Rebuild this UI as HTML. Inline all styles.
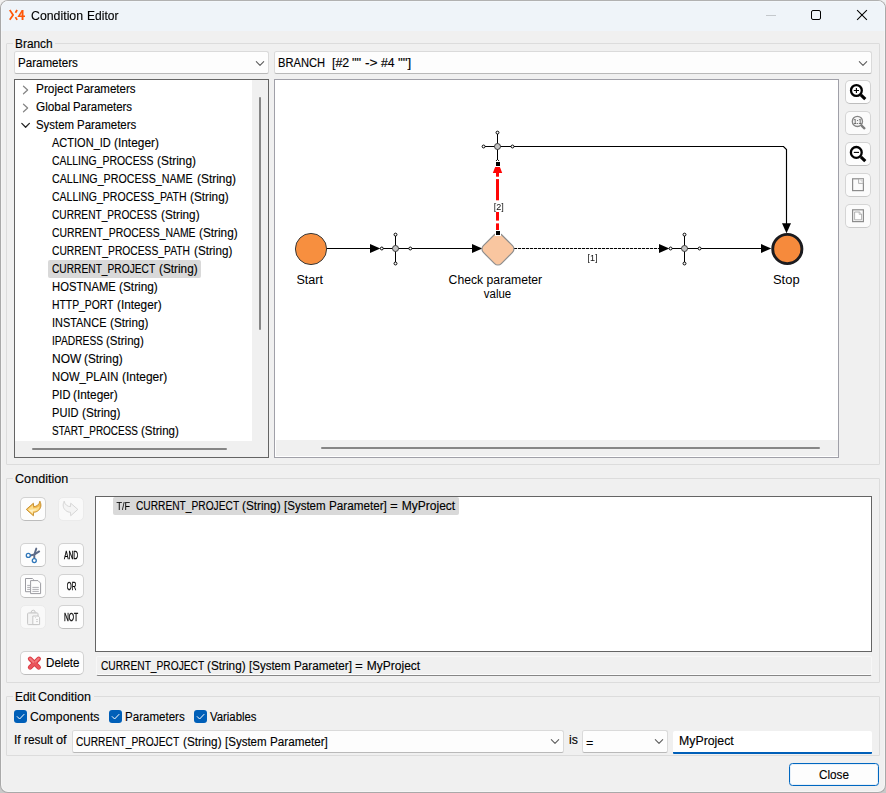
<!DOCTYPE html>
<html lang="en"><head><meta charset="utf-8"><title>Condition Editor</title>
<style>
html,body{margin:0;padding:0;width:886px;height:793px;overflow:hidden}
html{background:#c9c9c9}
body{background:linear-gradient(#f0f0f0 0,#f0f0f0 50%,#c9c9c9 50%,#c9c9c9 100%)}
body{font-family:"Liberation Sans", sans-serif;font-size:12px;color:#000}
.abs{position:absolute}
.win{position:absolute;left:0;top:0;width:886px;height:793px;box-sizing:border-box;border:1px solid #a9a9a9;border-top-color:#b1b1b1;border-radius:8px;background:#f0f0f0;overflow:hidden;box-shadow:inset 0 0 0 1px #f5f5f5}
.win>*{margin-left:-1px;margin-top:-1px}
.title{position:absolute;left:1px;top:1px;width:884px;height:30px;background:#eff4f9;border-radius:7px 7px 0 0;box-shadow:inset 0 1px 0 #f3f7fb,inset 1px 0 0 #f3f7fb,inset -1px 0 0 #f3f7fb}
.grp{position:absolute;box-sizing:border-box;border:1px solid #dcdcdc;border-radius:1px}
.combo{position:absolute;box-sizing:border-box;border:1px solid #dadada;border-bottom-color:#b9b9b9;border-radius:2.5px;background:#fdfdfd}
.tree{position:absolute;box-sizing:border-box;border:1px solid #646464;background:#f0f0f0}
.canvas{position:absolute;box-sizing:border-box;border:1px solid #a0a0a8;background:#fff}
.btn{position:absolute;box-sizing:border-box;border:1px solid #d2d2d2;border-bottom-color:#bdbdbd;border-radius:5px;background:#fdfdfd}
.btn.soft{border-color:#d5d5d5;border-bottom-color:#c9c9c9;background:#fbfbfb}
.btn.dis{border-color:#ebebeb;background:#f9f9f9}
.btn.def{border:1px solid #0067c0;border-radius:3.5px;box-shadow:inset 0 0 0 1px #5aa0de22}
.status{position:absolute;box-sizing:border-box;border:1px solid #f7f7f7;border-bottom-color:#868686;border-radius:2px;background:#f0f0f0;box-shadow:inset 0 -1px 0 #fcfcfc}
.edit{position:absolute;box-sizing:border-box;border:0;border-bottom:2px solid #005fb8;border-radius:2px 2px 1px 1px;background:#fff}
.t{position:absolute;white-space:pre;line-height:16px;height:16px;-webkit-text-stroke:0.13px #000}
.t i{position:absolute;top:0;font-style:normal;transform-origin:0 50%}
svg{overflow:visible}
svg text{font-family:"Liberation Sans", sans-serif}
</style></head>
<body>
<div class="win">
<div class="title"></div>
<svg class="abs" style="left:8px;top:9px" width="18" height="12" viewBox="0 0 18 12">
<path d="M1.75 1.1 L5.1 5.95 L1.75 10.8" fill="none" stroke="#ff5708" stroke-width="1.75" stroke-linejoin="miter"/>
<path d="M9.1 1 L7.45 3.8 M7.45 8.1 L9.1 10.9" fill="none" stroke="#ff5708" stroke-width="1.75"/>
<path d="M14.55 10.9 V1.1" fill="none" stroke="#ff5708" stroke-width="1.9"/>
<path d="M14.2 1.6 L10.7 7.35 H17" fill="none" stroke="#ff5708" stroke-width="1.5" stroke-linejoin="miter"/>
</svg>
<div class="abs" style="left:766px;top:15px;width:10px;height:1px;background:#c4c8cc"></div>
<div class="abs" style="left:811px;top:10px;width:10px;height:10px;box-sizing:border-box;border:1px solid #000;border-radius:2px"></div>
<svg class="abs" style="left:856px;top:9px" width="12" height="12" viewBox="0 0 12 12"><path d="M1.1 1.1 L10.9 10.9 M10.9 1.1 L1.1 10.9" stroke="#000" stroke-width="1.05" fill="none"/></svg>
<div class="grp" style="left:6px;top:43px;width:874px;height:422px"></div>
<div class="abs" style="left:13px;top:37px;width:41.6px;height:14px;background:#f0f0f0"></div>
<span class="t" style="left:14.55px;top:36px;"><i id="t0_0" style="left:0.00px;transform:scaleX(0.9900)">Branch</i></span>
<div class="grp" style="left:6px;top:478px;width:874px;height:205px"></div>
<div class="abs" style="left:13px;top:472px;width:57.3px;height:14px;background:#f0f0f0"></div>
<span class="t" style="left:14.55px;top:471px;"><i id="t1_0" style="left:0.00px;transform:scaleX(1.0522)">Condition</i></span>
<div class="grp" style="left:6px;top:696px;width:874px;height:60px"></div>
<div class="abs" style="left:13px;top:690px;width:80.9px;height:14px;background:#f0f0f0"></div>
<span class="t" style="left:14.55px;top:689px;"><i id="t2_0" style="left:0.00px;transform:scaleX(0.9940)">Edit </i><i id="t2_1" style="left:23.87px;transform:scaleX(1.0468)">Condition</i></span>
<div class="combo" style="left:14px;top:51px;width:255px;height:23px"></div>
<span class="t" style="left:17.55px;top:55px;"><i id="t3_0" style="left:0.00px;transform:scaleX(0.9648)">Parameters</i></span>
<svg class="abs" style="left:255px;top:59.5px" width="10" height="7" viewBox="0 0 10 7"><path d="M1.3 1.6 L5.0 5.4 L8.7 1.6" fill="none" stroke="#5c5c5c" stroke-width="1.05" stroke-linecap="round" stroke-linejoin="round"/></svg>
<div class="combo" style="left:274px;top:51px;width:598px;height:23px"></div>
<span class="t" style="left:277.75px;top:55px;"><i id="t4_0" style="left:0.00px;transform:scaleX(0.9304)">BRANCH  </i><i id="t4_1" style="left:53.78px;transform:scaleX(1.0320)">[#2 </i><i id="t4_2" style="left:74.44px;transform:scaleX(1.0805)">"" </i><i id="t4_3" style="left:87.25px;transform:scaleX(1.1465)">-&gt; </i><i id="t4_4" style="left:103.70px;transform:scaleX(1.0188)">#4 </i><i id="t4_5" style="left:120.70px;transform:scaleX(1.1089)">""]</i></span>
<svg class="abs" style="left:858px;top:59.5px" width="10" height="7" viewBox="0 0 10 7"><path d="M1.3 1.6 L5.0 5.4 L8.7 1.6" fill="none" stroke="#5c5c5c" stroke-width="1.05" stroke-linecap="round" stroke-linejoin="round"/></svg>
<div class="tree" style="left:14px;top:79px;width:255px;height:379px"><div class="abs" style="left:0;top:0;width:237px;height:361px;background:#fff"></div></div>
<div class="abs" style="left:259px;top:97px;width:2px;height:233px;background:#868686;border-radius:1px"></div>
<div class="abs" style="left:32px;top:448px;width:195px;height:2px;background:#868686;border-radius:1px"></div>
<svg class="abs" style="left:22px;top:84.6px" width="8" height="10" viewBox="0 0 8 10"><path d="M1.5 1.2 L5.6 5 L1.5 8.8" fill="none" stroke="#868686" stroke-width="1.25" stroke-linecap="round" stroke-linejoin="round"/></svg>
<svg class="abs" style="left:22px;top:102.6px" width="8" height="10" viewBox="0 0 8 10"><path d="M1.5 1.2 L5.6 5 L1.5 8.8" fill="none" stroke="#868686" stroke-width="1.25" stroke-linecap="round" stroke-linejoin="round"/></svg>
<svg class="abs" style="left:20px;top:121px" width="11" height="9" viewBox="0 0 11 9"><path d="M1.8 2.4 L5.6 6.2 L9.4 2.4" fill="none" stroke="#262626" stroke-width="1.3" stroke-linecap="round" stroke-linejoin="round"/></svg>
<span class="t" style="left:35.85px;top:81px;"><i id="t5_0" style="left:0.00px;transform:scaleX(0.9865)">Project </i><i id="t5_1" style="left:40.14px;transform:scaleX(0.9594)">Parameters</i></span>
<span class="t" style="left:35.85px;top:99px;"><i id="t6_0" style="left:0.00px;transform:scaleX(0.9825)">Global </i><i id="t6_1" style="left:37.37px;transform:scaleX(0.9525)">Parameters</i></span>
<span class="t" style="left:35.85px;top:117px;"><i id="t7_0" style="left:0.00px;transform:scaleX(0.9502)">System </i><i id="t7_1" style="left:41.19px;transform:scaleX(0.9554)">Parameters</i></span>
<div class="abs" style="left:48px;top:260px;width:153px;height:18px;background:#d9d9d9;border-radius:2px"></div>
<span class="t" style="left:51.85px;top:135px;"><i id="t8_0" style="left:0.00px;transform:scaleX(0.9182)">ACTION_ID </i><i id="t8_1" style="left:62.34px;transform:scaleX(0.9902)">(Integer)</i></span>
<span class="t" style="left:51.85px;top:153px;"><i id="t9_0" style="left:0.00px;transform:scaleX(0.8701)">CALLING_PROCESS </i><i id="t9_1" style="left:105.30px;transform:scaleX(0.9901)">(String)</i></span>
<span class="t" style="left:51.85px;top:171px;"><i id="t10_0" style="left:0.00px;transform:scaleX(0.8892)">CALLING_PROCESS_NAME </i><i id="t10_1" style="left:144.67px;transform:scaleX(0.9934)">(String)</i></span>
<span class="t" style="left:51.85px;top:189px;"><i id="t11_0" style="left:0.00px;transform:scaleX(0.8763)">CALLING_PROCESS_PATH </i><i id="t11_1" style="left:138.64px;transform:scaleX(0.9813)">(String)</i></span>
<span class="t" style="left:51.85px;top:207px;"><i id="t12_0" style="left:0.00px;transform:scaleX(0.8467)">CURRENT_PROCESS </i><i id="t12_1" style="left:108.70px;transform:scaleX(0.9798)">(String)</i></span>
<span class="t" style="left:51.85px;top:225px;"><i id="t13_0" style="left:0.00px;transform:scaleX(0.8679)">CURRENT_PROCESS_NAME </i><i id="t13_1" style="left:147.59px;transform:scaleX(0.9825)">(String)</i></span>
<span class="t" style="left:51.85px;top:243px;"><i id="t14_0" style="left:0.00px;transform:scaleX(0.8574)">CURRENT_PROCESS_PATH </i><i id="t14_1" style="left:141.96px;transform:scaleX(0.9732)">(String)</i></span>
<span class="t" style="left:51.85px;top:261px;"><i id="t15_0" style="left:0.00px;transform:scaleX(0.8500)">CURRENT_PROJECT </i><i id="t15_1" style="left:106.66px;transform:scaleX(0.9810)">(String)</i></span>
<span class="t" style="left:51.85px;top:279px;"><i id="t16_0" style="left:0.00px;transform:scaleX(0.9377)">HOSTNAME </i><i id="t16_1" style="left:67.44px;transform:scaleX(0.9865)">(String)</i></span>
<span class="t" style="left:51.85px;top:297px;"><i id="t17_0" style="left:0.00px;transform:scaleX(0.8639)">HTTP_PORT </i><i id="t17_1" style="left:64.66px;transform:scaleX(0.9831)">(Integer)</i></span>
<span class="t" style="left:51.85px;top:315px;"><i id="t18_0" style="left:0.00px;transform:scaleX(0.9102)">INSTANCE </i><i id="t18_1" style="left:57.92px;transform:scaleX(0.9743)">(String)</i></span>
<span class="t" style="left:51.85px;top:333px;"><i id="t19_0" style="left:0.00px;transform:scaleX(0.8540)">IPADRESS </i><i id="t19_1" style="left:54.35px;transform:scaleX(0.9632)">(String)</i></span>
<span class="t" style="left:51.85px;top:351px;"><i id="t20_0" style="left:0.00px;transform:scaleX(0.9971)">NOW </i><i id="t20_1" style="left:32.58px;transform:scaleX(0.9829)">(String)</i></span>
<span class="t" style="left:51.85px;top:369px;"><i id="t21_0" style="left:0.00px;transform:scaleX(0.9385)">NOW_PLAIN </i><i id="t21_1" style="left:70.03px;transform:scaleX(0.9970)">(Integer)</i></span>
<span class="t" style="left:51.85px;top:387px;"><i id="t22_0" style="left:0.00px;transform:scaleX(0.9203)">PID </i><i id="t22_1" style="left:21.48px;transform:scaleX(0.9869)">(Integer)</i></span>
<span class="t" style="left:51.85px;top:405px;"><i id="t23_0" style="left:0.00px;transform:scaleX(0.9225)">PUID </i><i id="t23_1" style="left:29.77px;transform:scaleX(0.9780)">(String)</i></span>
<span class="t" style="left:51.85px;top:423px;"><i id="t24_0" style="left:0.00px;transform:scaleX(0.8299)">START_PROCESS </i><i id="t24_1" style="left:89.45px;transform:scaleX(0.9607)">(String)</i></span>
<div class="canvas" style="left:274px;top:79px;width:565px;height:379px"><div class="abs" style="left:1px;top:360px;width:562px;height:16px;background:#f0f0f0"></div></div>
<div class="abs" style="left:321px;top:447px;width:499px;height:2px;background:#868686;border-radius:1px"></div>
<svg class="abs" style="left:0;top:0" width="886" height="793" viewBox="0 0 886 793">
<g fill="none" stroke="#000" stroke-width="1">
<!-- flow lines -->
<path d="M327 248.5 H371"/>
<path d="M412 248.5 H473"/>
<path d="M514 248.5 H660" stroke-dasharray="3.15 0.85"/>
<path d="M701 248.5 H762"/>
<path d="M514 146.5 H783.5 L786.5 149.5 V224" stroke-width="1.15"/>
<!-- junction 1 -->
<path d="M383 248.5 H409 M395.5 236 V262"/>
<!-- junction 2 -->
<path d="M672 248.5 H698 M684.5 236 V262"/>
<!-- junction 3 -->
<path d="M485 146.5 H511 M497.5 134 V160"/>
</g>
<g fill="#000" stroke="none">
<path d="M370 244 L380.3 248.5 L370 253 Z"/>
<path d="M472 244 L482.3 248.5 L472 253 Z"/>
<path d="M659 244 L669.3 248.5 L659 253 Z"/>
<path d="M761 244 L771.3 248.5 L761 253 Z"/>
<path d="M782 223.3 L791 223.3 L786.5 233.2 Z"/>
<rect x="496" y="162" width="4" height="4"/>
<rect x="496" y="231" width="4" height="4"/>
<path d="M496 161 L497.5 159.4 L499 161" fill="none" stroke="#000" stroke-width="0.9"/>
</g>
<g fill="#fff" stroke="#000" stroke-width="1">
<circle cx="381.8" cy="248.5" r="1.45"/><circle cx="410.3" cy="248.5" r="1.45"/><circle cx="395.5" cy="234.6" r="1.45"/><circle cx="395.5" cy="263.5" r="1.45"/>
<circle cx="670.6" cy="248.5" r="1.45"/><circle cx="699.6" cy="248.5" r="1.45"/><circle cx="684.5" cy="234.6" r="1.45"/><circle cx="684.5" cy="263.5" r="1.45"/>
<circle cx="483.6" cy="146.5" r="1.45"/><circle cx="512.5" cy="146.5" r="1.45"/><circle cx="497.5" cy="132.6" r="1.45"/>
</g>
<g fill="#c2c2c2" stroke="#3c3c3c" stroke-width="1">
<circle cx="395.5" cy="248.5" r="3"/><circle cx="684.5" cy="248.5" r="3"/><circle cx="497.5" cy="146.5" r="3"/>
</g>
<!-- red connection -->
<g fill="#ff0505" stroke="none">
<path d="M495.2 166.9 H499.9 L502.2 173.1 H492.8 Z"/>
<rect x="496" y="173" width="3" height="3.7"/>
<rect x="496" y="179.1" width="3" height="21.2"/>
<rect x="496" y="212" width="3" height="8.6"/>
<rect x="496" y="223.4" width="3" height="7.4"/>
</g>
<!-- nodes -->
<circle cx="311" cy="249" r="15.6" fill="#f78f3f" stroke="#3a3a3a" stroke-width="1"/>
<circle cx="787.3" cy="249" r="14.6" fill="#f68a3c" stroke="#1b1b1f" stroke-width="2.9"/>
<rect x="485.25" y="236.35" width="25.4" height="25.4" rx="4.8" transform="rotate(45 497.95 249.05)" fill="#f9c6a0" stroke="#8e8e8e" stroke-width="1.2"/>
<rect x="495" y="230" width="6" height="6" fill="#fff"/>
<rect x="496" y="231" width="4" height="4" fill="#000"/>
<!-- labels -->
<g fill="#000" font-size="12px">
<text x="296.4" y="284" textLength="26.6" lengthAdjust="spacingAndGlyphs">Start</text>
<text x="448.6" y="284" textLength="93.6" lengthAdjust="spacingAndGlyphs">Check parameter</text>
<text x="483.8" y="298" textLength="27.4" lengthAdjust="spacingAndGlyphs">value</text>
<text x="773" y="284" textLength="26.6" lengthAdjust="spacingAndGlyphs">Stop</text>
</g>

</svg>

<div class="btn" style="left:845px;top:80px;width:26px;height:24px"></div>
<div class="btn soft" style="left:845px;top:111px;width:26px;height:24px"></div>
<div class="btn" style="left:845px;top:142px;width:26px;height:24px"></div>
<div class="btn soft" style="left:845px;top:173px;width:26px;height:24px"></div>
<div class="btn soft" style="left:845px;top:204px;width:26px;height:24px"></div>
<div class="btn" style="left:20px;top:497px;width:26px;height:24px"></div>
<div class="btn dis" style="left:58px;top:497px;width:26px;height:24px"></div>
<div class="btn" style="left:20px;top:543px;width:26px;height:24px"></div>
<div class="btn" style="left:58px;top:543px;width:26px;height:24px"></div>
<div class="btn" style="left:20px;top:574px;width:26px;height:24px"></div>
<div class="btn" style="left:58px;top:574px;width:26px;height:24px"></div>
<div class="btn dis" style="left:20px;top:605px;width:26px;height:24px"></div>
<div class="btn" style="left:58px;top:605px;width:26px;height:24px"></div>
<div class="btn" style="left:20px;top:651px;width:64px;height:24px"></div>
<span class="t" style="left:46.05px;top:655px;"><i id="t25_0" style="left:0.00px;transform:scaleX(0.9672)">Delete</i></span>
<div class="tree" style="left:95px;top:496px;width:777px;height:156px;background:#fff"></div>
<div class="abs" style="left:113px;top:497px;width:346px;height:18px;background:#d9d9d9;border-radius:2px"></div>
<span class="t" style="left:135.85px;top:498px;"><i id="t26_0" style="left:0.00px;transform:scaleX(0.8498)">CURRENT_PROJECT </i><i id="t26_1" style="left:106.63px;transform:scaleX(0.9809)">(String) </i><i id="t26_2" style="left:148.50px;transform:scaleX(0.9604)">[System </i><i id="t26_3" style="left:193.34px;transform:scaleX(0.9749)">Parameter] </i><i id="t26_4" style="left:254.47px;transform:scaleX(1.1111)">= </i><i id="t26_5" style="left:265.96px;">MyProject</i></span>
<div class="status" style="left:96px;top:656px;width:776px;height:20px"></div>
<span class="t" style="left:100.75px;top:658px;"><i id="t27_0" style="left:0.00px;transform:scaleX(0.8501)">CURRENT_PROJECT </i><i id="t27_1" style="left:106.66px;transform:scaleX(0.9812)">(String) </i><i id="t27_2" style="left:148.54px;transform:scaleX(0.9607)">[System </i><i id="t27_3" style="left:193.40px;transform:scaleX(0.9752)">Parameter] </i><i id="t27_4" style="left:254.55px;transform:scaleX(1.1114)">= </i><i id="t27_5" style="left:266.05px;">MyProject</i></span>
<svg class="abs" style="left:14px;top:710px" width="13" height="13" viewBox="0 0 13 13"><rect x="0" y="0" width="13" height="13" rx="3" fill="#005fb8"/><path d="M3.2 6.6 L5.6 9 L10 4.4" fill="none" stroke="#fff" stroke-width="1" stroke-linecap="round" stroke-linejoin="round"/></svg>
<svg class="abs" style="left:109px;top:710px" width="13" height="13" viewBox="0 0 13 13"><rect x="0" y="0" width="13" height="13" rx="3" fill="#005fb8"/><path d="M3.2 6.6 L5.6 9 L10 4.4" fill="none" stroke="#fff" stroke-width="1" stroke-linecap="round" stroke-linejoin="round"/></svg>
<svg class="abs" style="left:194px;top:710px" width="13" height="13" viewBox="0 0 13 13"><rect x="0" y="0" width="13" height="13" rx="3" fill="#005fb8"/><path d="M3.2 6.6 L5.6 9 L10 4.4" fill="none" stroke="#fff" stroke-width="1" stroke-linecap="round" stroke-linejoin="round"/></svg>
<span class="t" style="left:29.85px;top:709px;"><i id="t28_0" style="left:0.00px;transform:scaleX(1.0206)">Components</i></span>
<span class="t" style="left:124.65px;top:709px;"><i id="t29_0" style="left:0.00px;transform:scaleX(0.9632)">Parameters</i></span>
<span class="t" style="left:209.65px;top:709px;"><i id="t30_0" style="left:0.00px;transform:scaleX(0.9452)">Variables</i></span>
<span class="t" style="left:13.85px;top:732px;"><i id="t31_0" style="left:0.00px;transform:scaleX(1.0095)">If </i><i id="t31_1" style="left:10.11px;transform:scaleX(0.9846)">result </i><i id="t31_2" style="left:42.30px;transform:scaleX(1.0638)">of</i></span>
<div class="combo" style="left:72px;top:730px;width:492px;height:23px"></div>
<span class="t" style="left:76.25px;top:734px;"><i id="t32_0" style="left:0.00px;transform:scaleX(0.8497)">CURRENT_PROJECT </i><i id="t32_1" style="left:106.61px;transform:scaleX(0.9807)">(String) </i><i id="t32_2" style="left:148.48px;transform:scaleX(0.9603)">[System </i><i id="t32_3" style="left:193.31px;transform:scaleX(0.9744)">Parameter]</i></span>
<svg class="abs" style="left:550px;top:738px" width="10" height="7" viewBox="0 0 10 7"><path d="M1.3 1.6 L5.0 5.4 L8.7 1.6" fill="none" stroke="#5c5c5c" stroke-width="1.05" stroke-linecap="round" stroke-linejoin="round"/></svg>
<span class="t" style="left:568.75px;top:732px;"><i id="t33_0" style="left:0.00px;transform:scaleX(1.0205)">is</i></span>
<div class="combo" style="left:582px;top:730px;width:86px;height:23px"></div>
<span class="t" style="left:586.05px;top:735px;"><i id="t34_0" style="left:0.00px;transform:scaleX(1.0477)">=</i></span>
<svg class="abs" style="left:654px;top:738px" width="10" height="7" viewBox="0 0 10 7"><path d="M1.3 1.6 L5.0 5.4 L8.7 1.6" fill="none" stroke="#5c5c5c" stroke-width="1.05" stroke-linecap="round" stroke-linejoin="round"/></svg>
<div class="edit" style="left:673px;top:731px;width:199px;height:23px"></div>
<span class="t" style="left:678.85px;top:733px;"><i id="t35_0" style="left:0.00px;transform:scaleX(1.0264)">MyProject</i></span>
<div class="btn def" style="left:789px;top:763px;width:90px;height:23px"></div>
<span class="t" style="left:818.65px;top:767px;"><i id="t36_0" style="left:0.00px;transform:scaleX(0.9760)">Close</i></span>
<span class="t" style="left:30.55px;top:8px;will-change:transform;"><i id="t37_0" style="left:0.00px;transform:scaleX(1.0272)">Condition </i><i id="t37_1" style="left:55.52px;transform:scaleX(1.0024)">Editor</i></span>
<svg class="abs" style="left:0;top:0;will-change:transform" width="886" height="793" viewBox="0 0 886 793">

<!-- zoom in -->
<g fill="none" stroke="#000" stroke-linecap="round">
<circle cx="856.4" cy="90.5" r="5.4" stroke-width="2.3" fill="#fff"/>
<path d="M860.8 94.8 L865.3 99.1" stroke-width="3.1" stroke-linecap="butt"/>
<path d="M853.8 90.5 H859 M856.4 87.9 V93.1" stroke-width="1.1" stroke-linecap="butt"/>
</g>
<!-- 1:1 -->
<g fill="none" stroke="#858585" stroke-linecap="round">
<circle cx="857.4" cy="121.4" r="5.1" stroke-width="1.3" fill="#f4f4f4"/>
<path d="M861.8 125.8 L864.4 128.3" stroke-width="2.3" stroke="#7c7c7c"/>
</g>
<text x="853.5" y="124" font-size="7px" font-weight="bold" fill="#5a5a5a" textLength="8" lengthAdjust="spacingAndGlyphs">1:1</text>
<!-- zoom out -->
<g fill="none" stroke="#000" stroke-linecap="round">
<circle cx="856.3" cy="152.4" r="5.4" stroke-width="2.3" fill="#fff"/>
<path d="M860.8 156.8 L865.3 161.1" stroke-width="3.1" stroke-linecap="butt"/>
<path d="M853.8 152.4 H859" stroke-width="1.1" stroke-linecap="butt"/>
</g>
<!-- page icons -->
<g fill="#fbfbfb" stroke="#8c8c8c" stroke-width="1.2">
<rect x="852.6" y="178.8" width="10.8" height="11.8"/>
<path d="M858.6 179 V183.4 H863.2" fill="none" stroke-width="0.9" stroke="#a8a8a8"/>
<path d="M858.8 179 L863.2 183.2 V179 Z" fill="#d8d8d8" stroke="none"/>
<rect x="852.6" y="209.8" width="10.8" height="11.8"/>
<path d="M854.6 212 H859.4 L861.6 214.2 V219.8 H854.6 Z" fill="#fff" stroke-width="0.8" stroke="#a0a0a0"/>
<path d="M859.2 212 V214.4 H861.6" fill="none" stroke-width="0.7" stroke="#a8a8a8"/>
</g>
<!-- undo -->
<path d="M26.3 509.4 L33.4 503.2 L33.6 506.6 C36.6 506.6 39.2 504.8 39.9 501.2 C41.6 504.6 41.2 508 38.6 510.3 C37 511.7 35.4 512.2 33.6 512.3 L33.4 515.8 Z" fill="#f3b84c" stroke="#c28a28" stroke-width="0.9" stroke-linejoin="round"/>
<path d="M27.6 509.5 L33 505 L33.2 508.2 C35.4 508.3 37.6 507.8 39.4 506 C39.6 508 38.6 509.6 37.4 510.5 C36.2 511.3 35 511.5 33.2 511.6 L33 514.3 Z" fill="#fbdc8c"/>
<path d="M28.6 509.9 L32.6 509.4 L36.6 509.6 C35.6 510.6 34.4 510.9 32.7 511 L32.6 513.2 Z" fill="#fff1c4"/>
<!-- redo (disabled) -->
<path d="M77.8 509.4 L70.7 503.2 L70.5 506.6 C67.5 506.6 64.9 504.8 64.2 501.2 C62.5 504.6 62.9 508 65.5 510.3 C67.1 511.7 68.7 512.2 70.5 512.3 L70.7 515.8 Z" fill="#f4f4f4" stroke="#d2d2d2" stroke-width="0.9" stroke-linejoin="round"/>
<!-- cut -->
<g fill="none" stroke-linecap="round">
<path d="M30.4 555.5 L34.6 554.4 L39.2 551.4" stroke="#5d6b88" stroke-width="1.9"/>
<path d="M34.3 558.6 L34.3 554.6 L36.3 548.6" stroke="#5d6b88" stroke-width="1.9"/>
<circle cx="28.3" cy="555.4" r="2" stroke="#2f77ba" stroke-width="1.3" fill="#fff"/>
<circle cx="34.3" cy="560.6" r="2" stroke="#2f77ba" stroke-width="1.3" fill="#fff"/>
</g>
<!-- copy -->
<g fill="#fdfdfd" stroke="#9b9ba1" stroke-width="1">
<path d="M25.5 578.5 H32.4 L33.6 579.7 V591.7 H25.5 Z"/>
<path d="M27.2 585.4 H30.4 M27.2 587.4 H30.4 M27.2 589.4 H30.4" stroke-width="0.8"/>
<path d="M30.6 580.6 H38 L40.6 583.2 V593.6 H30.6 Z"/>
<path d="M32.4 587.4 H38.8 M32.4 589.4 H38.8 M32.4 591.4 H38.8" stroke-width="0.8"/>
</g>
<!-- paste (disabled) -->
<g fill="#f4f4f4" stroke="#c6c6c6" stroke-width="1">
<path d="M31.4 612.6 V611 Q33.2 609.2 35 611 V612.6" fill="#f4f4f4"/>
<path d="M29.6 613.2 H36.8" stroke-width="1.4"/>
<rect x="27.6" y="613" width="10.4" height="11.6" rx="0.8"/>
<path d="M32.8 616 H38.2 L39.6 617.4 V624.6 H32.8 Z" fill="#fafafa"/>
<path d="M35 617.6 H35.8 M36 619.6 H38 M36 621.6 H38" stroke-width="0.8"/>
</g>
<!-- delete X -->
<g fill="none" stroke-linecap="round">
<path d="M30.1 658.8 L38.7 667.4 M38.7 658.8 L30.1 667.4" stroke="#d9363f" stroke-width="4.5"/>
<path d="M30.1 658.8 L38.7 667.4 M38.7 658.8 L30.1 667.4" stroke="#e9555c" stroke-width="2.9"/>
<path d="M30 658.6 L33.4 662 M38.6 658.6 L35.6 661.6" stroke="#f0797c" stroke-width="1.8"/>
</g>
<g fill="#111" font-size="9.6px">
<text x="587.5" y="260.6" textLength="10" lengthAdjust="spacingAndGlyphs">[1]</text>
<text x="493.8" y="209.7" textLength="10" lengthAdjust="spacingAndGlyphs">[2]</text>
</g>
<!-- logic labels -->
<g font-family="'DejaVu Sans Mono', 'Liberation Mono', monospace" font-size="10.6px" fill="#000" stroke="#000" stroke-width="0.3">
<text x="63.9" y="559.1" textLength="14.4" lengthAdjust="spacingAndGlyphs">AND</text>
<text x="66.8" y="590.1" textLength="9.5" lengthAdjust="spacingAndGlyphs">OR</text>
<text x="63.9" y="621.1" textLength="14.4" lengthAdjust="spacingAndGlyphs">NOT</text>
<text x="116.4" y="509.9" textLength="13.6" lengthAdjust="spacingAndGlyphs" font-size="10.4px" stroke-width="0.08">T/F</text>
</g>
</svg>

</div>
</body></html>
